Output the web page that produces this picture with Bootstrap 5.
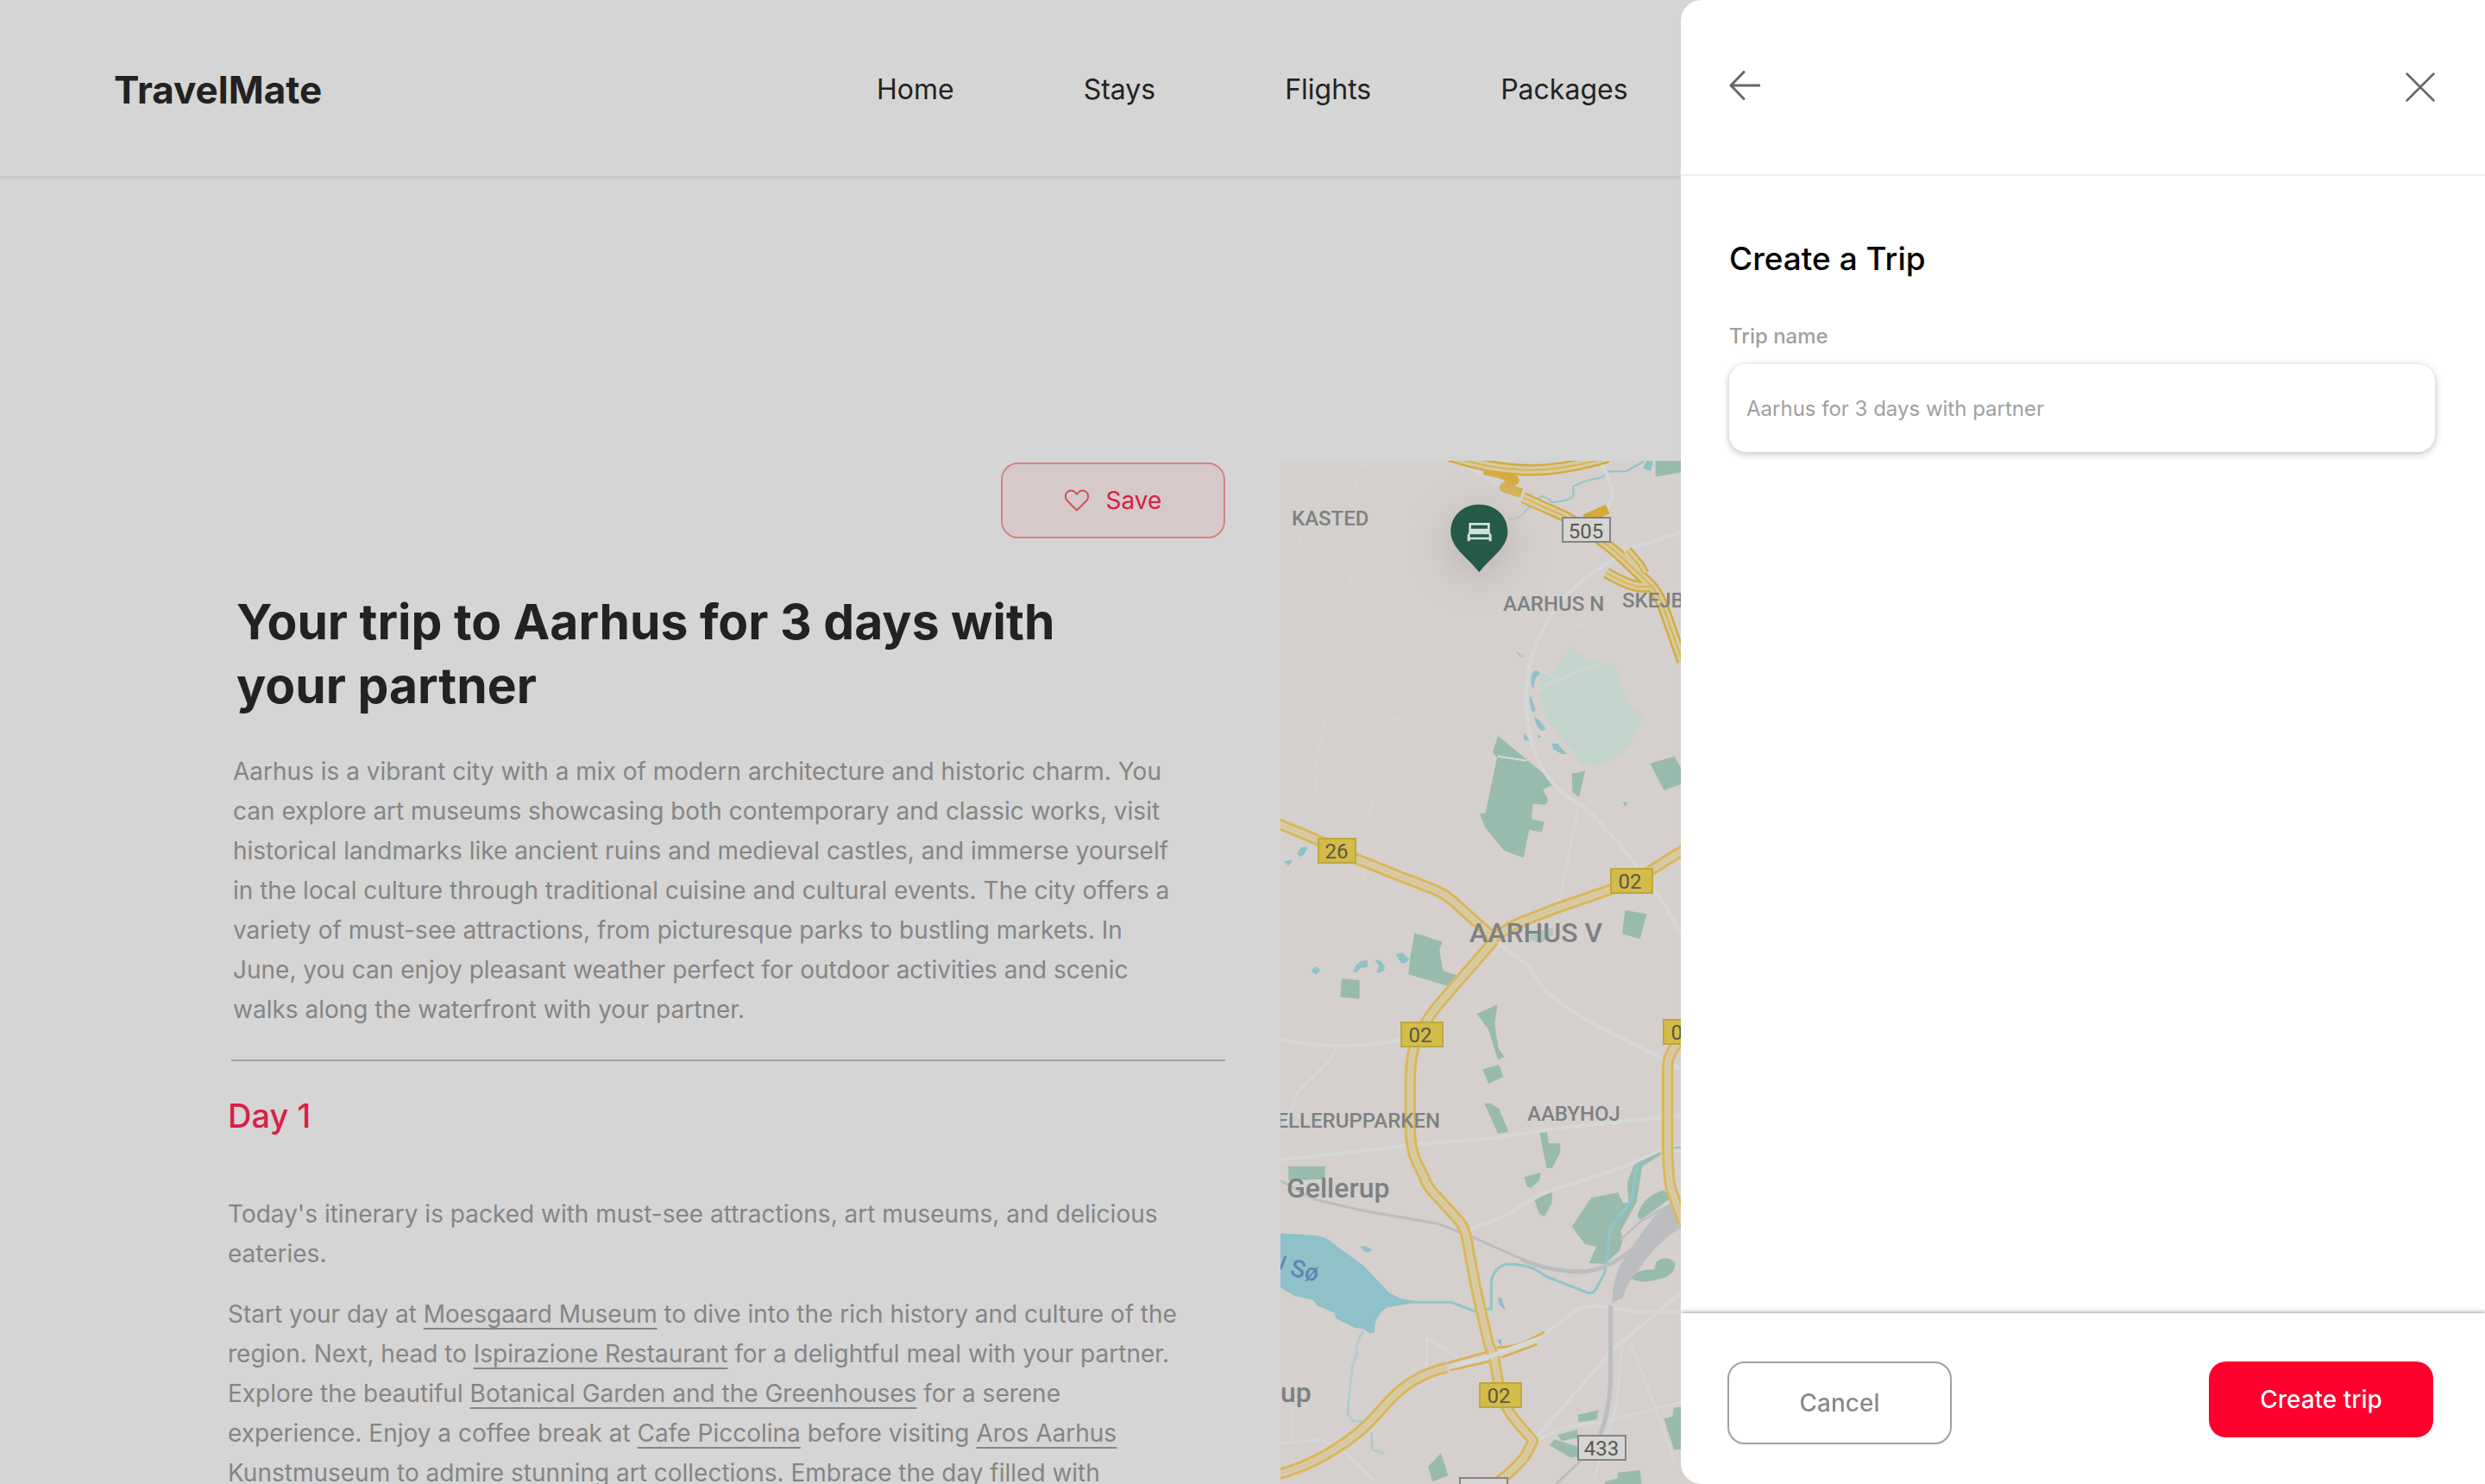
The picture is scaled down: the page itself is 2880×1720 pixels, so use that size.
<!DOCTYPE html>
<html lang="en">
<head>
<meta charset="utf-8">
<meta name="viewport" content="width=device-width, initial-scale=1">
<title>TravelMate</title>
<link href="https://cdn.jsdelivr.net/npm/bootstrap@5.3.0/dist/css/bootstrap.min.css" rel="stylesheet">
<style>
  body { font-family: Inter, "Liberation Sans", sans-serif; background: #d5d5d5; color: #222; }
  .site-header { height: 204px; padding: 4px 132px 0; box-shadow: 0 2px 5px rgba(0,0,0,.09); }
  .site-brand { font-size: 44px; line-height: 56px; font-weight: 700; color: #222; width: 884px; }
  .site-links { gap: 150px; }
  .site-links a { font-size: 32px; line-height: 40px; color: #222; text-decoration: none; }
  .site-main { padding: 330px 0 0 264px; gap: 64px; }
  .trip { width: 1156px; padding-top: 2px; }
  .btn-save { width: 260px; height: 88px; border: 2px solid #d48384; border-radius: 20px; background: #d5cac9; color: #d92045; font-size: 28px; gap: 20px; }
  .trip-intro { padding: 60px 0 35px 6px; }
  .trip-title { font-size: 57px; line-height: 74px; font-weight: 700; margin-bottom: 39px; }
  .copy { font-size: 28px; line-height: 46px; color: #858585; margin-bottom: 24px; }
  .copy a { color: inherit; text-decoration: underline; text-decoration-thickness: 2px; text-underline-offset: 6px; text-decoration-skip-ink: none; }
  .trip-rule { border: 0; border-top: 2px solid #a5a5a5; opacity: 1; }
  .day-title { font-size: 38px; line-height: 46px; font-weight: 500; color: #d92045; margin: 40px 0 68px; }
  .trip-map { height: calc(100vh - 534px); background: #d5d0cd; }
  .trip-map text { font-family: Roboto, sans-serif; font-size: 24px; font-weight: 500; fill: #7d8183; }
  .trip-map .town { font-size: 32px; }
  .trip-map .shield { font-size: 24px; font-weight: 400; fill: #5c594a; text-anchor: middle; }
  .drawer.offcanvas { --bs-offcanvas-width: 932px; background: #fff; color: #000; border: 0; border-radius: 24px 0 0 24px; overflow: hidden; }
  .drawer-head { height: 204px; padding: 0 58px 0 56px; border-bottom: 2px solid #eee; }
  .icon-btn { background: none; border: 0; padding: 0; line-height: 0; color: #666; }
  .drawer-body { padding: 72px 58px 0 56px; }
  .drawer-title { font-size: 37px; line-height: 48px; font-weight: 500; margin-bottom: 50px; }
  .drawer-label { font-size: 24px; line-height: 32px; font-weight: 500; color: #a0a0a0; margin-bottom: 16px; }
  .drawer-input.form-control { height: 102px; padding: 0 20px; border: 0; border-radius: 20px; font-size: 24px; box-shadow: 0 2px 8px rgba(0,0,0,.27); }
  .drawer-input::placeholder { color: #a0a0a0; opacity: 1; }
  .drawer-foot { height: 198px; padding: 56px 60px 0 54px; box-shadow: 0 -1px 5px rgba(0,0,0,.4); }
  .drawer-foot .btn { width: 260px; height: 88px; border-radius: 20px; font-size: 28px; font-weight: 500; }
  .drawer-foot .btn-cancel { height: 96px; border: 2px solid #a0a0a0; color: #8a8a8a; background: #fff; }
  .drawer-foot .btn-create { background: #ff002e; border: 0; color: #fff; }
</style>
<script src="https://cdn.jsdelivr.net/npm/bootstrap@5.3.0/dist/js/bootstrap.bundle.min.js" defer></script>
</head>
<body class="vh-100 overflow-hidden">
<header class="site-header d-flex align-items-center">
  <a class="site-brand text-decoration-none" href="#">TravelMate</a>
  <nav class="site-links d-flex" aria-label="Main">
    <a href="#">Home</a><a href="#">Stays</a><a href="#">Flights</a><a href="#">Packages</a>
  </nav>
</header>

<main class="site-main d-flex align-items-start">
  <article class="trip flex-shrink-0">
    <div class="d-flex justify-content-end">
      <button type="button" class="btn btn-save d-flex align-items-center justify-content-center">
        <svg width="28" height="26" viewBox="0 0 28 26" fill="none" stroke="#cf5156" stroke-width="2" stroke-linejoin="round" aria-hidden="true"><path d="M14 24.5 2.8 13.2C.2 10.400.2 6 2.800 3.400 5.400.8 9.300.8 11.800 3.400L14 5.700l2.200-2.300c2.500-2.600 6.400-2.600 9 0 2.600 2.600 2.600 7 0 9.800z"/></svg>
        <span>Save</span>
      </button>
    </div>
    <div class="trip-intro">
      <h1 class="trip-title ms-1">Your trip to Aarhus for 3 days with<br>your partner</h1>
      <p class="copy mb-0">Aarhus is a vibrant city with a mix of modern architecture and historic charm. You<br>
      can explore art museums showcasing both contemporary and classic works, visit<br>
      historical landmarks like ancient ruins and medieval castles, and immerse yourself<br>
      in the local culture through traditional cuisine and cultural events. The city offers a<br>
      variety of must-see attractions, from picturesque parks to bustling markets. In<br>
      June, you can enjoy pleasant weather perfect for outdoor activities and scenic<br>
      walks along the waterfront with your partner.</p>
    </div>
    <hr class="trip-rule my-0 ms-1">
    <h2 class="day-title">Day 1</h2>
    <p class="copy">Today's itinerary is packed with must-see attractions, art museums, and delicious<br>eateries.</p>
    <p class="copy">Start your day at <a href="#">Moesgaard Museum</a> to dive into the rich history and culture of the<br>
    region. Next, head to <a href="#">Ispirazione Restaurant</a> for a delightful meal with your partner.<br>
    Explore the beautiful <a href="#">Botanical Garden and the Greenhouses</a> for a serene<br>
    experience. Enjoy a coffee break at <a href="#">Cafe Piccolina</a> before visiting <a href="#">Aros Aarhus</a><br>
    Kunstmuseum to admire stunning art collections. Embrace the day filled with</p>
  </article>

  <div class="trip-map flex-fill">
    <svg class="w-100 h-100 d-block" viewBox="0 0 1396 1186" preserveAspectRatio="xMinYMin slice" role="img" aria-label="Map of Aarhus">
      <defs>
        <radialGradient id="pinShade"><stop offset="0" stop-color="#b9b0b2"/><stop offset=".4" stop-color="#c9c2c3" stop-opacity=".8"/><stop offset="1" stop-color="#d5d0cd" stop-opacity="0"/></radialGradient>
        <path id="roads" d="M0 1272 140 1330 280 1398 440 1462 540 1500Q590 1520 630 1560L755 1672M755 1672Q800 1635 850 1615L980 1565 1160 1503Q1240 1478 1310 1430L1420 1360M755 1680 620 1835 560 1905Q490 1990 470 2080 462 2130 463 2200L463 2330Q463 2400 485 2450L510 2500Q520 2535 560 2575L620 2640Q655 2675 660 2720L690 2880 735 3080 755 3130 768 3210Q780 3290 830 3350L890 3420 870 3460Q850 3500 760 3570M1410 2020Q1358 2070 1358 2120L1358 2400Q1360 2530 1376 2560L1412 2660M0 3538Q110 3508 200 3450 290 3395 350 3325L400 3270Q480 3190 590 3165"/>
        <path id="motorway" d="M600-5Q720 35 830 42 960 55 1150 0M855 140 1000 205Q1100 262 1190 340L1300 445Q1330 480 1350 540L1410 710M1145 402Q1230 450 1265 450L1310 448M1215 325 1258 375 1275 405"/>
      </defs>
      <g transform="translate(-4 -4) scale(0.33333)" fill="none" stroke-linejoin="round">
        <!-- parks -->
        <g fill="#99bbae">
          <path d="M1316 0H1500V35L1316 68zM768 968 970 1135 925 1155 942 1190 935 1208 890 1205 885 1258 930 1268 920 1304 877 1295 857 1393 790 1368 725 1290 705 1240 725 1235 765 1045 750 1025zM1025 1100 1072 1090 1050 1182 1027 1165zM1297 1064 1382 1040 1410 1090 1410 1135 1345 1158zM1210 1575 1285 1588 1262 1675 1200 1657zM478 1652 575 1685 565 1715 577 1785 622 1800 605 1842 457 1798 463 1740zM225 1813 287 1818 287 1883 220 1877zM695 1935 767 1903 757 1970 770 2055 790 2085 768 2095 735 1990zM715 2128 772 2112 787 2155 735 2178zM722 2248 740 2245 772 2265 805 2345 768 2352zM912 2346 938 2344 945 2385 985 2386 985 2415 957 2472 937 2472zM40 2465 168 2465 165 2510 40 2515zM860 2503 917 2487 912 2515 885 2540 868 2535zM895 2583 957 2552 955 2595 930 2640 912 2630zM1092 2575 1185 2557 1205 2595 1222 2590 1218 2520 1250 2440 1330 2410 1335 2425 1270 2465 1250 2590 1195 2690 1203 2720 1190 2760 1140 2805 1085 2802 1110 2745 1070 2735 1025 2675zM1252 2640Q1270 2570 1345 2548L1370 2575 1265 2652zM1228 2855Q1250 2820 1310 2825L1320 2795Q1360 2770 1385 2805 1380 2850 1320 2860 1270 2875 1228 2855zM1045 3330 1118 3313 1112 3345 1050 3355zM975 3400 1045 3380 1045 3410 990 3420zM947 3435 965 3415 1045 3440 1045 3475 1020 3478zM1345 3342 1375 3335 1380 3305 1410 3300 1410 3450 1380 3450zM570 3463 595 3540 540 3562 525 3510zM1140 3562 1185 3550 1185 3530 1262 3522 1268 3575H1140z"/>
        </g>
        <path fill="#b5c6be" d="M880 1655 960 1635 960 1660 920 1690 880 1680z"/>
        <path fill="#c3d4cd" d="M1020 660 1085 705 1160 710 1180 740 1215 850 1272 900 1235 985Q1215 1025 1160 1050L1110 1075 1055 1068 1040 1030Q930 940 910 820L915 750 955 752z"/>
        <path stroke="#d2d5d2" stroke-width="7" d="M900 810 1080 730 1140 715M925 745 990 790M768 1040 870 1055"/>
        <!-- lake and streams -->
        <path fill="#8fc1c8" d="M0 2698 135 2705 170 2715 300 2810 390 2905 430 2925 500 2938 385 2955Q335 2985 340 3042L325 3048 300 3030 270 3027 205 2995 200 2975 140 2950 125 2930 60 2915 0 2880zM290 2745Q300 2735 330 2755 325 2770 300 2760zM1272 40 1285 12 1308 12 1300 48zM118 1785 135 1770 152 1782 135 1800zM265 1790Q275 1745 315 1750V1772L290 1775 280 1790zM340 1748Q365 1745 375 1775 370 1795 345 1792L355 1770zM413 1728 435 1722 460 1745 445 1760 430 1758zM70 1378 85 1355 108 1355 95 1380 78 1390zM25 1405 55 1400 40 1422zM833 672 862 695 845 695zM887 800Q875 745 905 740L915 755Q895 760 893 800zM880 825 900 880 890 888Q875 860 880 825zM895 900Q920 920 935 945L920 952Q895 930 895 900zM857 955 878 985 860 985zM905 965 920 970 908 978zM957 995 975 995 1008 1032 990 1032 960 1015zM1202 1198 1220 1200 1210 1215zM768 2920 782 2925 795 2970 772 2945zM765 3070 780 3065 780 3090z"/>
        <g stroke="#8fc5cd" stroke-width="9">
          <path d="M460 2938H605L690 2970 745 2960V2865Q755 2815 800 2805 860 2805 900 2825L940 2850 1080 2905Q1100 2910 1110 2890L1140 2835 1160 2680 1235 2580 1250 2460Q1280 2420 1330 2412L1404 2400"/>
          <path d="M300 3040Q270 3080 278 3115L262 3160 245 3325 265 3352H300M328 3390 332 3450 372 3465" stroke="#b0cbce" stroke-width="8"/>
          <path d="M805 215Q840 220 870 180L920 135 945 145 955 157Q1030 150 1030 130V100L1080 80 1130 70 1150 50 1215 48 1275 15" stroke-width="6"/>
        </g>
        <!-- minor roads -->
        <g stroke="#d6d7d7">
          <path stroke-width="13" d="M640 20 855 140M1115 0Q1180 110 1160 150 1150 200 1080 240M1410 258 1290 300 1220 320 1180 350Q1020 440 960 540 860 690 866 850 875 1120 1060 1210 1160 1300 1250 1420 1340 1530 1410 1670M755 1680 870 1765 930 1850Q980 1900 1100 1970L1300 2070 1410 2130M0 2443 230 2420 470 2390 750 2368 1000 2330 1410 2288M0 2020Q210 2070 430 2026M670 2685 780 2645 920 2560 1200 2470 1330 2410H1410M600 3165 740 3128 900 3070 1050 2960Q1080 2950 1120 2950L1230 2970H1410M890 3420 1040 3250 1170 3100 1410 2900"/>
          <path stroke-width="8" d="M1050 1200 980 1560M205 2050 190 2090 70 2210 30 2320M900 3425Q980 3365 1130 3355L1410 3285M1200 3090 1180 3300 1100 3560M1230 3080 1380 3480M0 3430 150 3415 210 3435 340 3560M520 3060V3170M520 3060 630 3130"/>
          <path stroke-width="4" opacity=".75" d="M360 18 290 30 255 175M190 245 235 340 265 460 360 550 480 690 570 745 590 810 640 870 710 920H775M185 825 310 850 365 900 520 930 740 1030M185 825 135 1070V1160L70 1200 12 1205M135 1075 340 1160 310 1280 295 1575M12 1520 280 1585 500 1660M375 245 570 215M745 400 780 570 850 690 955 760M970 545 1020 590 1100 578M50 3250V3430M12 370 80 310 75 260M420 3185 510 3175 570 3235"/>
        </g>
        <!-- railway -->
        <path stroke="#bbbdc0" stroke-width="9" d="M12 2515 130 2580 300 2620 560 2665 680 2712 880 2800"/>
        <path stroke="#bbbdc0" stroke-width="15" d="M850 2790Q960 2835 1070 2832 1160 2820 1240 2750M1160 2950V3200Q1155 3340 1110 3430"/>
        <path stroke="#bbbdc0" stroke-width="9" d="M1110 3425 1050 3495 970 3570"/>
        <path fill="#bbbdc0" d="M1165 2940Q1165 2850 1215 2770L1310 2640 1375 2590 1405 2610V2680Q1330 2720 1260 2820 1215 2870 1200 2930L1212 2945 1195 2925z"/>
        <path stroke="#bbbdc0" stroke-width="8" d="M1195 2720 1260 2660 1380 2590"/>
        <!-- main roads -->
        <path stroke="#dab14a" stroke-width="8" d="M590 3150 740 3108M600 3174 745 3143M765 3095Q820 3095 870 3072L930 3042M780 3130 905 3084"/>
        <use href="#roads" stroke="#dab75a" stroke-width="40"/><use href="#roads" stroke="#d6cba9" stroke-width="22"/>
        <use href="#roads" stroke="#d8c48c" stroke-width="3"/>
        <path stroke="#d6d7d7" stroke-width="16" d="M600 3163 742 3126 900 3068"/>
        <path stroke="#d6a93a" stroke-width="34" d="M720 45Q790 55 825 80L790 105 850 125M1070 215 1150 180"/>
        <use href="#motorway" stroke="#d6a93a" stroke-width="40"/><use href="#motorway" stroke="#d6cba0" stroke-width="26"/><use href="#motorway" stroke="#d9b453" stroke-width="6"/>
        <!-- hotel pin -->
        <circle cx="703" cy="300" r="260" fill="url(#pinShade)"/>
        <path fill="#245a46" d="M703 400C660 345 604 315 604 258 604 202 648 164 703 164s99 38 99 94c0 57-56 87-99 142z"/>
        <path fill="#d4e0dc" d="M667 228H740V262L746 270V292H737V286H671V292H662V270L667 262zM675 236V248H732V236zM671 268V278H737V268z" fill-rule="evenodd"/>
      </g>
      <text x="13" y="75">KASTED</text>
      <text x="258" y="174">AARHUS N</text>
      <text x="396" y="170">SKEJBY</text>
      <text x="219" y="558" class="town">AARHUS V</text>
      <text x="185" y="773" text-anchor="end">GELLERUPPARKEN</text>
      <text x="286" y="765">AABYHOJ</text>
      <text x="7" y="854" class="town">Gellerup</text>
      <text x="0" y="1091" class="town">up</text>
      <text x="10" y="944" transform="rotate(14 10 944)" style="font-size:28px;fill:#5b88b6">Sø</text>
      <path d="M0 937 6 922" stroke="#5b88b6" stroke-width="3"/>
      <g fill="#d5bb48" stroke="#bda83f" stroke-width="2">
        <path d="M44 438h43v28H44zM383 473h48v28h-48zM140 651h48v28h-48zM444 648h48v28h-48zM231 1069h48v28h-48z"/>
      </g>
      <g fill="#d5d5d5" stroke="#848484" stroke-width="2">
        <path d="M327 66h55v28h-55zM345 1130h55v28h-55zM208 1179h55v28h-55z"/>
      </g>
      <text class="shield" x="65" y="461">26</text>
      <text class="shield" x="405" y="496">02</text>
      <text class="shield" x="162" y="674">02</text>
      <text class="shield" x="466" y="671">02</text>
      <text class="shield" x="253" y="1092">02</text>
      <text class="shield" x="354" y="90">505</text>
      <text class="shield" x="372" y="1153">433</text>
    </svg>
  </div>
</main>

<aside class="drawer offcanvas offcanvas-end show" data-bs-backdrop="false" data-bs-scroll="true" tabindex="-1" aria-labelledby="drawerTitle">
  <div class="drawer-head d-flex align-items-center justify-content-between flex-shrink-0">
    <button type="button" class="icon-btn" aria-label="Back">
      <svg width="36" height="38" viewBox="0 0 36 38" fill="none" stroke="currentColor" stroke-width="3" stroke-linecap="round" stroke-linejoin="round"><path d="M17 1.500 2 17l15 15.500M2 17h33"/></svg>
    </button>
    <button type="button" class="icon-btn" aria-label="Close">
      <svg width="34" height="34" viewBox="0 0 34 34" fill="none" stroke="currentColor" stroke-width="2.500" stroke-linecap="round"><path d="M1.500 1.500l31 31M32.500 1.500l-31 31"/></svg>
    </button>
  </div>
  <div class="drawer-body flex-grow-1">
    <h2 class="drawer-title" id="drawerTitle">Create a Trip</h2>
    <label class="drawer-label d-block" for="tripName">Trip name</label>
    <input class="drawer-input form-control" id="tripName" type="text" placeholder="Aarhus for 3 days with partner">
  </div>
  <div class="drawer-foot d-flex justify-content-between align-items-start flex-shrink-0">
    <button type="button" class="btn btn-cancel">Cancel</button>
    <button type="button" class="btn btn-create">Create trip</button>
  </div>
</aside>
</body>
</html>
